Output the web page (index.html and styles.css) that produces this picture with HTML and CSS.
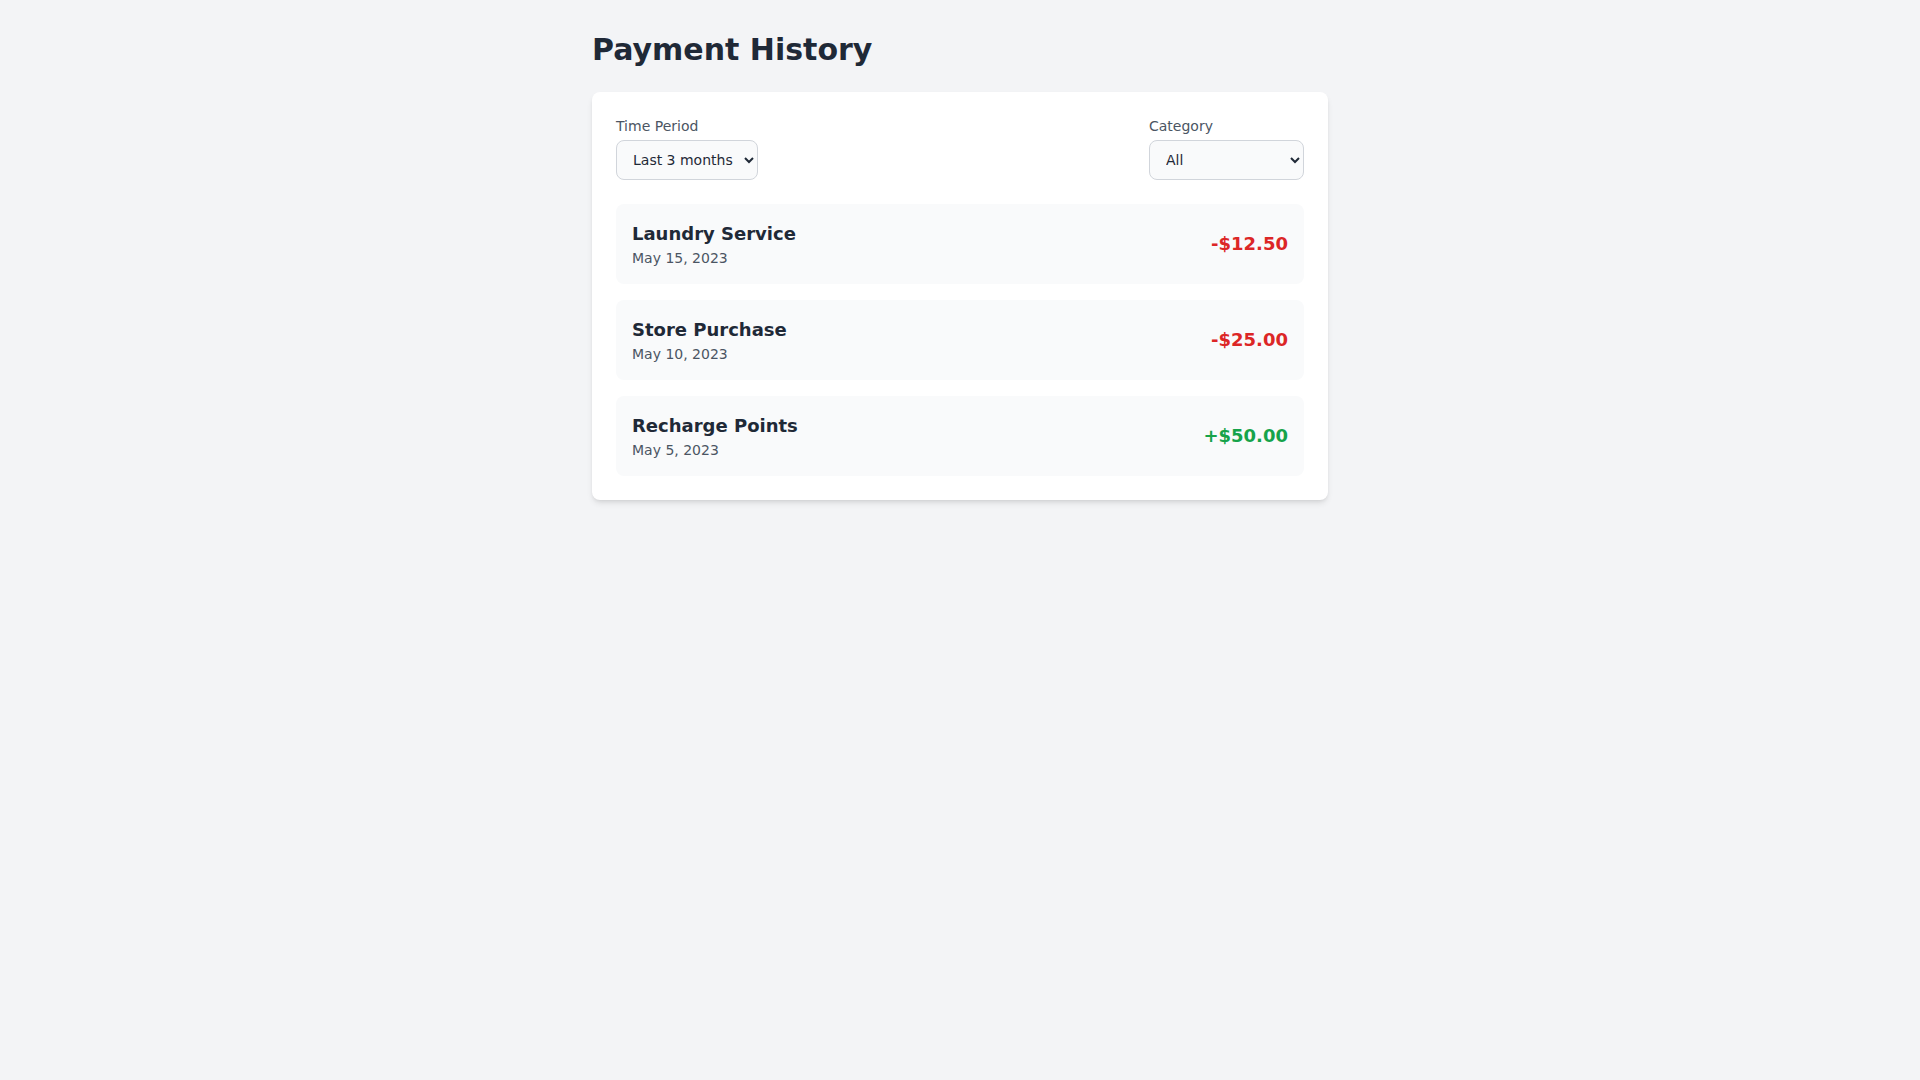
FILE: index.html
```html
<!DOCTYPE html>
<html lang="en">
<head>
<meta charset="utf-8">
<title>Payment History</title>
<link rel="stylesheet" href="styles.css">
</head>
<body>
<main class="container">
  <h1 class="page-title">Payment History</h1>
  <section class="card">
    <div class="filters">
      <div class="filter">
        <label class="filter-label" for="period">Time Period</label>
        <select id="period" class="select select-period">
          <option>Last month</option>
          <option selected>Last 3 months</option>
          <option>Last 6 months</option>
          <option>Last year</option>
        </select>
      </div>
      <div class="filter">
        <label class="filter-label" for="category">Category</label>
        <select id="category" class="select select-category">
          <option selected>All</option>
          <option>Laundry Service</option>
          <option>Store Purchase</option>
          <option>Recharge Points</option>
        </select>
      </div>
    </div>
    <ul class="list">
      <li class="item">
        <div class="item-info">
          <div class="item-title">Laundry Service</div>
          <div class="item-date">May 15, 2023</div>
        </div>
        <div class="amount negative">-$12.50</div>
      </li>
      <li class="item">
        <div class="item-info">
          <div class="item-title">Store Purchase</div>
          <div class="item-date">May 10, 2023</div>
        </div>
        <div class="amount negative">-$25.00</div>
      </li>
      <li class="item">
        <div class="item-info">
          <div class="item-title">Recharge Points</div>
          <div class="item-date">May 5, 2023</div>
        </div>
        <div class="amount positive">+$50.00</div>
      </li>
    </ul>
  </section>
</main>
</body>
</html>
```
FILE: styles.css
```css
* { box-sizing: border-box; }
html, body { margin: 0; padding: 0; }
body {
  background: #f3f4f6;
  font-family: "DejaVu Sans", sans-serif;
  color: #1f2937;
}
.container {
  max-width: 768px;
  margin: 0 auto;
  padding: 32px 16px;
}
.page-title {
  margin: 0 0 24px 0;
  font-size: 30px;
  line-height: 36px;
  font-weight: 700;
  color: #1f2937;
}
.card {
  background: #ffffff;
  border-radius: 8px;
  box-shadow: 0 4px 6px -1px rgba(0,0,0,0.1), 0 2px 4px -2px rgba(0,0,0,0.1);
  padding: 24px;
}
.filters {
  display: flex;
  justify-content: space-between;
  margin-bottom: 24px;
}
.filter { display: flex; flex-direction: column; }
.filter-label {
  font-size: 14px;
  line-height: 20px;
  color: #4b5563;
  margin-bottom: 4px;
}
.select {
  height: 40px;
  padding: 8px 4px 8px 12px;
  font-family: "DejaVu Sans", sans-serif;
  font-size: 14px;
  color: #1f2937;
  background: #f9fafb;
  border: 1px solid #d1d5db;
  border-radius: 8px;
}
.select-period { width: 142px; }
.select-category { width: 155px; }
.list {
  list-style: none;
  margin: 0;
  padding: 0;
  display: flex;
  flex-direction: column;
  gap: 16px;
}
.item {
  display: flex;
  justify-content: space-between;
  align-items: center;
  background: #f9fafb;
  border-radius: 8px;
  padding: 16px;
}
.item-title {
  font-size: 18px;
  line-height: 28px;
  font-weight: 700;
  color: #1f2937;
}
.item-date {
  font-size: 14px;
  line-height: 20px;
  color: #4b5563;
}
.amount {
  font-size: 18px;
  line-height: 28px;
  font-weight: 700;
}
.negative { color: #dc2626; }
.positive { color: #16a34a; }
```
